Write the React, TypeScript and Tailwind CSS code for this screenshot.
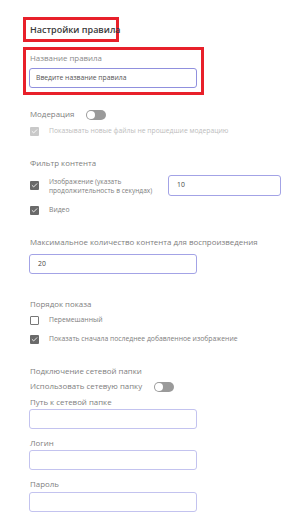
import { Check } from 'lucide-react'

const font = { fontFamily: '"Open Sans", "Noto Sans", sans-serif' }

function Toggle() {
  return (
    <span className="inline-flex items-center w-[20px] h-[10px] rounded-full bg-[#9a9a9a] p-px">
      <span className="w-[8px] h-[8px] rounded-full bg-white" />
    </span>
  )
}

function Box({ state }: { state: 'on' | 'off' | 'disabled' }) {
  if (state === 'off') {
    return <span className="w-[9px] h-[9px] shrink-0 rounded-[1px] border border-[#777] bg-white" />
  }
  return (
    <span
      className={`w-[9px] h-[9px] shrink-0 rounded-[1px] flex items-center justify-center ${
        state === 'on' ? 'bg-[#6a6a6a]' : 'bg-[#c9c9c9]'
      }`}
    >
      <Check className="w-[7px] h-[7px] text-white" strokeWidth={3} />
    </span>
  )
}

function Field({ value, light, className = '' }: { value?: string; light?: boolean; className?: string }) {
  return (
    <div
      className={`rounded-[3px] border flex items-center px-[8px] text-[6.8px] text-[#444] ${
        light ? 'border-[#c3c3ef]' : 'border-[#a3a3e6]'
      } ${className}`}
    >
      {value}
    </div>
  )
}

export default function App() {
  return (
    <div className="w-[300px] h-[514px] bg-white overflow-hidden text-[#7e7e7e]" style={font}>
      {/* annotated header */}
      <div className="pl-[23px] pt-[17px]">
        <div className="w-[96px] h-[25px] border-[3px] border-[#e8202a] pl-[4px] flex items-center text-[9px] font-semibold text-[#3a3a3a] whitespace-nowrap">
          Настройки правила
        </div>
        <div className="mt-[5px] w-[181px] h-[48px] border-[3px] border-[#e8202a] pl-[3px] pt-[2px]">
          <div className="pl-px text-[7.9px] leading-[12px] text-[#8a8a8a]">Название правила</div>
          <div className="mt-[4px] h-[20px] w-[168px] rounded-[3px] border border-[#9090de] flex items-center px-[6px] text-[6.8px] text-[#555]">
            Введите название правила
          </div>
        </div>
      </div>

      <div className="pl-[29px]">
        {/* moderation */}
        <div className="mt-[14px] pl-px flex items-center gap-[12px] h-[12px] text-[7.9px]">
          <span>Модерация</span>
          <Toggle />
        </div>
        <div className="mt-[5px] pl-px flex items-center gap-[10px] h-[10px] text-[6.8px] text-[#bdbdbd]">
          <Box state="disabled" />
          <span>Показывать новые файлы не прошедшие модерацию</span>
        </div>

        {/* content filter */}
        <div className="mt-[21px] pl-px text-[7.9px] leading-[12px]">Фильтр контента</div>
        <div className="mt-[6px] flex items-center">
          <div className="pl-px flex items-center gap-[10px] w-[139px]">
            <Box state="on" />
            <span className="text-[6.6px] leading-[9px]">
              Изображение (указать
              <br />
              продолжительность в секундах)
            </span>
          </div>
          <Field value="10" className="w-[113px] h-[21px]" />
        </div>
        <div className="mt-[9px] pl-px flex items-center gap-[10px] h-[10px] text-[6.8px]">
          <Box state="on" />
          <span>Видео</span>
        </div>

        <div className="mt-[21px] pl-px text-[7.9px] leading-[12px]">
          Максимальное количество контента для воспроизведения
        </div>
        <Field value="20" className="mt-[6px] w-[168px] h-[20px]" />

        {/* order */}
        <div className="mt-[24px] pl-px text-[7.9px] leading-[12px]">Порядок показа</div>
        <div className="mt-[5px] pl-px flex items-center gap-[10px] h-[10px] text-[6.8px]">
          <Box state="off" />
          <span>Перемешанный</span>
        </div>
        <div className="mt-[9px] pl-px flex items-center gap-[10px] h-[10px] text-[6.8px]">
          <Box state="on" />
          <span>Показать сначала последнее добавленное изображение</span>
        </div>

        {/* network folder */}
        <div className="mt-[21px] pl-px text-[7.9px] leading-[12px]">Подключение сетевой папки</div>
        <div className="mt-[4px] pl-px flex items-center gap-[12px] h-[12px] text-[7.9px]">
          <span>Использовать сетевую папку</span>
          <Toggle />
        </div>
        <div className="mt-[3px] pl-px text-[7.9px] leading-[12px]">Путь к сетевой папке</div>
        <Field light className="mt-px w-[168px] h-[20px]" />
        <div className="mt-[8px] pl-px text-[7.9px] leading-[12px]">Логин</div>
        <Field light className="mt-px w-[168px] h-[20px]" />
        <div className="mt-[8px] pl-px text-[7.9px] leading-[12px]">Пароль</div>
        <Field light className="mt-[2px] w-[168px] h-[20px]" />
      </div>
    </div>
  )
}
